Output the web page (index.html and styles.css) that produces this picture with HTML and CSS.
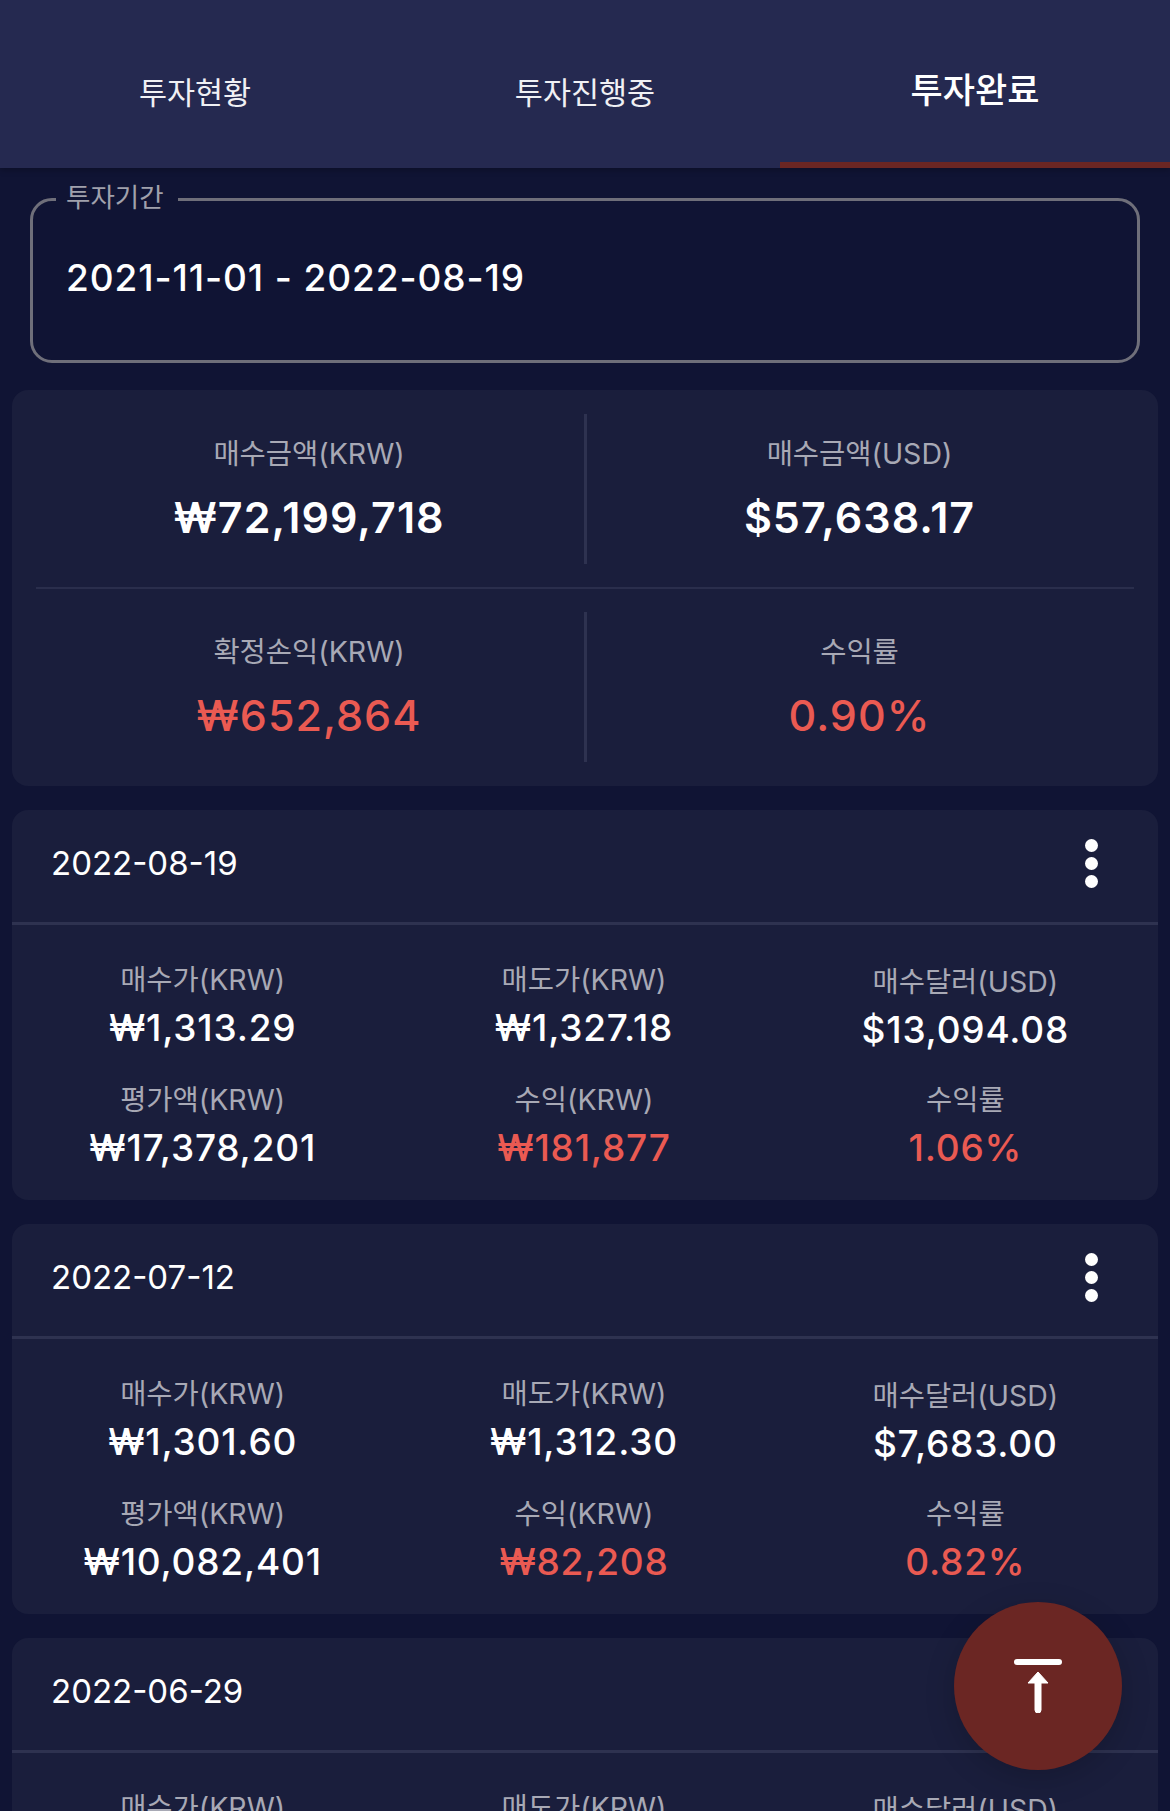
FILE: index.html
```html
<!DOCTYPE html>
<html lang="ko">
<head>
<meta charset="utf-8">
<title>투자완료</title>
<link rel="stylesheet" href="styles.css">
</head>
<body>
<div class="page">
  <nav class="tabs">
    <div class="tab">투자현황</div>
    <div class="tab">투자진행중</div>
    <div class="tab active">투자완료</div>
  </nav>
  <main class="content">
    <fieldset class="period">
      <legend>투자기간</legend>
      <div class="period-value">2021-11-01 - 2022-08-19</div>
    </fieldset>
    <section class="card summary">
      <div class="sum-row">
        <div class="sum-cell"><div class="label">매수금액(KRW)</div><div class="sum-value">₩72,199,718</div></div>
        <div class="sum-cell"><div class="label">매수금액(USD)</div><div class="sum-value">$57,638.17</div></div>
      </div>
      <div class="sum-rule"></div>
      <div class="sum-row">
        <div class="sum-cell"><div class="label">확정손익(KRW)</div><div class="sum-value red">₩652,864</div></div>
        <div class="sum-cell"><div class="label">수익률</div><div class="sum-value red">0.90%</div></div>
      </div>
    </section>
    <section class="card item">
      <header class="item-head"><span class="date">2022-08-19</span><span class="dots"><i></i><i></i><i></i></span></header>
      <div class="item-grid">
        <div class="cell"><div class="label">매수가(KRW)</div><div class="value">₩1,313.29</div></div>
        <div class="cell"><div class="label">매도가(KRW)</div><div class="value">₩1,327.18</div></div>
        <div class="cell shifted"><div class="label">매수달러(USD)</div><div class="value">$13,094.08</div></div>
        <div class="cell"><div class="label">평가액(KRW)</div><div class="value">₩17,378,201</div></div>
        <div class="cell"><div class="label">수익(KRW)</div><div class="value red">₩181,877</div></div>
        <div class="cell"><div class="label">수익률</div><div class="value red">1.06%</div></div>
      </div>
    </section>
    <section class="card item">
      <header class="item-head"><span class="date">2022-07-12</span><span class="dots"><i></i><i></i><i></i></span></header>
      <div class="item-grid">
        <div class="cell"><div class="label">매수가(KRW)</div><div class="value">₩1,301.60</div></div>
        <div class="cell"><div class="label">매도가(KRW)</div><div class="value">₩1,312.30</div></div>
        <div class="cell shifted"><div class="label">매수달러(USD)</div><div class="value">$7,683.00</div></div>
        <div class="cell"><div class="label">평가액(KRW)</div><div class="value">₩10,082,401</div></div>
        <div class="cell"><div class="label">수익(KRW)</div><div class="value red">₩82,208</div></div>
        <div class="cell"><div class="label">수익률</div><div class="value red">0.82%</div></div>
      </div>
    </section>
    <section class="card item">
      <header class="item-head"><span class="date">2022-06-29</span><span class="dots"><i></i><i></i><i></i></span></header>
      <div class="item-grid">
        <div class="cell"><div class="label">매수가(KRW)</div><div class="value">₩1,298.40</div></div>
        <div class="cell"><div class="label">매도가(KRW)</div><div class="value">₩1,301.60</div></div>
        <div class="cell shifted"><div class="label">매수달러(USD)</div><div class="value">$7,700.00</div></div>
      </div>
    </section>
  </main>
  <button class="fab" type="button" aria-label="맨 위로">
    <svg width="48" height="54" viewBox="0 0 48 54" fill="none">
      <rect x="0" y="0" width="48" height="6" rx="3" fill="#fff"/>
      <path d="M24 13 L34 24 H27 V51 a3 3 0 0 1 -6 0 V24 H14 Z" fill="#fff" stroke="#fff" stroke-linejoin="round"/>
    </svg>
  </button>
</div>
</body>
</html>
```
FILE: styles.css
```css
* { box-sizing: border-box; }
html, body { margin: 0; padding: 0; }
body {
  background: #101434;
  color: #fff;
  font-family: Inter, "Noto Sans CJK KR", sans-serif;
}
.page {
  position: relative;
  width: 1170px;
  height: 1811px;
  overflow: hidden;
}
.tabs {
  display: grid;
  grid-template-columns: repeat(3, 390px);
  height: 168px;
  background: #252950;
  box-shadow: 0 2px 6px rgba(0, 0, 0, 0.25);
  position: relative;
}
.tab {
  display: flex;
  align-items: center;
  justify-content: center;
  padding-top: 14px;
  font-size: 30.5px;
  color: #f0f0f4;
}
.tab.active {
  padding-top: 12px;
  font-size: 35px;
  font-weight: 500;
  color: #fff;
  border-bottom: 6px solid #6b2623;
}
.content {
  display: flex;
  flex-direction: column;
  padding: 0 12px;
}
.period {
  margin: 14px 18px 27px;
  padding: 0 33px;
  height: 181px;
  border: 3px solid #6f6f7a;
  border-radius: 22px;
  min-width: 0;
}
.period legend {
  margin-left: -10px;
  padding: 0 14px 4px 10px;
  font-size: 26.5px;
  line-height: 30px;
  color: #a0a1ac;
}
.period-value {
  margin-top: 40px;
  font-size: 37px;
  line-height: 44px;
  font-weight: 500;
  letter-spacing: 0.9px;
}
.card {
  background: #1a1e3c;
  border-radius: 16px;
  margin-bottom: 24px;
}
.summary {
  height: 396px;
  padding: 24px 24px 24px;
}
.sum-row {
  display: grid;
  grid-template-columns: 1fr 1fr;
  height: 150px;
}
.sum-cell {
  text-align: center;
  padding-top: 22px;
}
.sum-cell:first-child {
  border-right: 3px solid #2e3250;
  margin-right: -2px;
  padding-right: 2px;
}
.sum-rule {
  height: 2px;
  margin: 23px 0 23px;
  background: #2a2e4c;
}
.label {
  font-size: 28.5px;
  line-height: 36px;
  color: #a8a9b5;
}
.sum-value {
  margin-top: 20px;
  font-size: 43px;
  line-height: 50px;
  font-weight: 600;
  letter-spacing: 1px;
}
.red { color: #ea5a52; }
.sum-value.red { font-weight: 500; }
.item { height: 390px; }
.item-head {
  display: flex;
  align-items: center;
  justify-content: space-between;
  height: 115px;
  padding: 0 40px 6px 39px;
  border-bottom: 3px solid #2e3250;
}
.date { font-size: 33px; }
.dots {
  display: flex;
  flex-direction: column;
  gap: 5px;
  margin-right: 20px;
}
.dots i {
  display: block;
  width: 13px;
  height: 13px;
  border-radius: 50%;
  background: #fff;
}
.item-grid {
  display: grid;
  grid-template-columns: repeat(3, 1fr);
  padding: 37px 2px 0 0;
  row-gap: 30px;
}
.cell { text-align: center; height: 90px; }
.cell.shifted { padding-top: 2px; }
.value {
  margin-top: 8px;
  font-size: 37px;
  line-height: 44px;
  font-weight: 500;
  letter-spacing: 0.8px;
}
.fab {
  position: absolute;
  left: 954px;
  top: 1602px;
  width: 168px;
  height: 168px;
  display: flex;
  align-items: center;
  justify-content: center;
  border: 0;
  padding: 0;
  border-radius: 50%;
  background: #6b2623;
  box-shadow: 0 8px 30px rgba(0, 0, 0, 0.18);
}
```
